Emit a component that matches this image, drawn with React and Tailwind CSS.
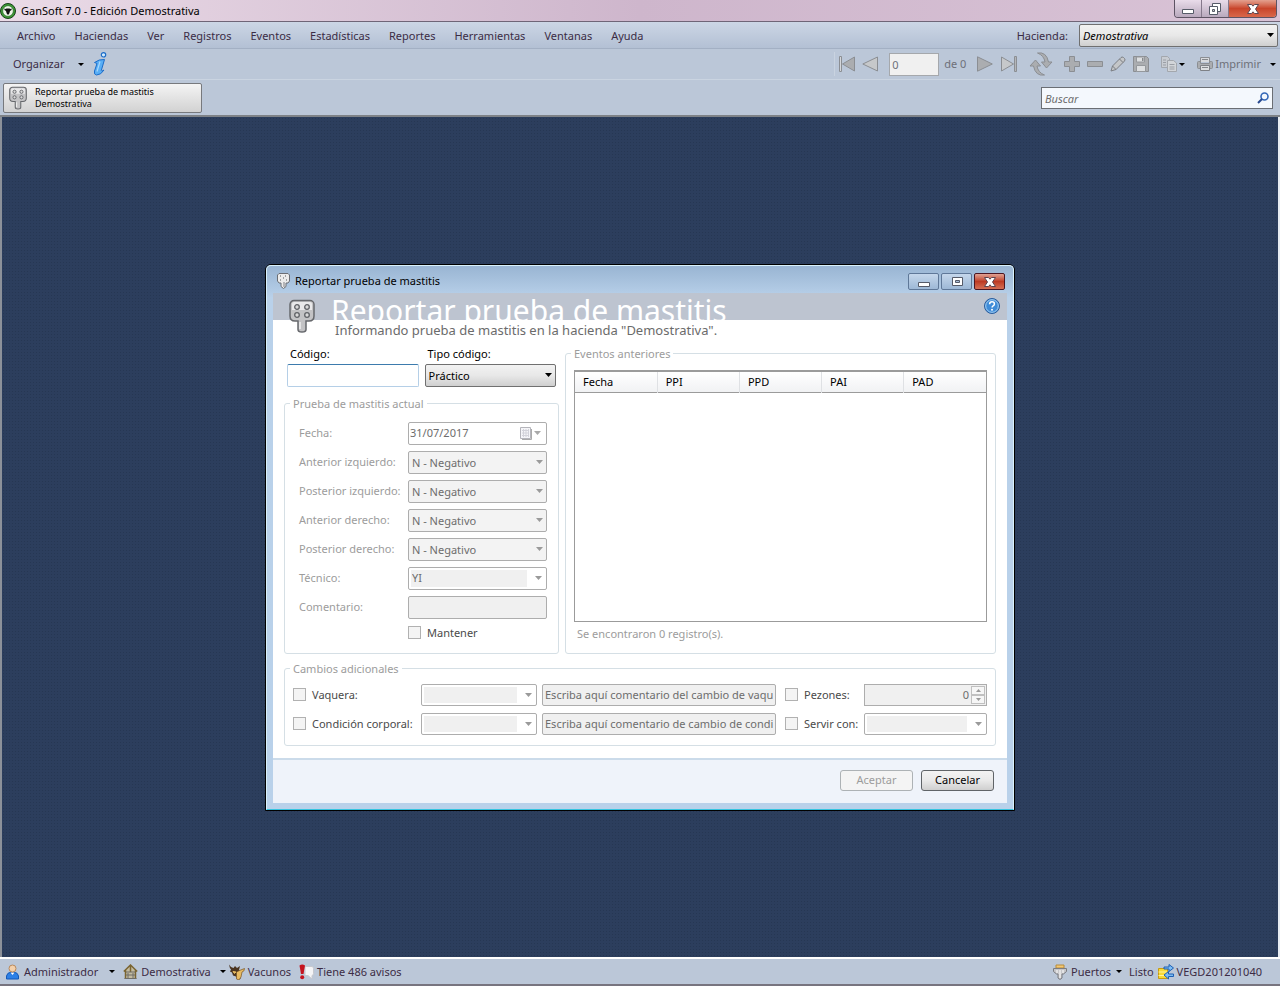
import React from "react";

const Paddle = ({ className }) => (
  <svg className={className} viewBox="0 0 26 34" fill="none">
    <path d="M5 1.500h16a4 4 0 0 1 4 4V17c0 3-2 5-5 5h-3v8.500q0 2.500-4 2.500t-4-2.500V22H6c-3 0-5-2-5-5V5.500a4 4 0 0 1 4-4z" fill="#c3c3c5" stroke="#66686c" strokeWidth="1.500" />
    <path d="M5 3h16q2 0 2 2v6H3V5q0-2 2-2z" fill="#e9e9ea" />
    {[[8, 8], [18, 8], [8, 16], [18, 16]].map(([x, y]) => (
      <circle key={`${x}-${y}`} cx={x} cy={y} r="2.300" fill="#d9d9d9" stroke="#606266" strokeWidth="1.300" />
    ))}
    <path d="M11 23v7" stroke="#efefef" strokeWidth="1.500" />
  </svg>
);

const SmallPaddle = () => (
  <svg className="h-4 w-[13px]" viewBox="0 0 13 16">
    <path d="M2 .5h9l1.500 1.500v6L11 10H9v3.500l-2.500 2-2.500-2V10H2L.5 8V2z" fill="#ececec" stroke="#6b6e74" />
    <path d="M3 2.500h1v1H3zM8 2.500h1v1H8zM6 4.500h1v1H6zM3 6.500h1v1H3zM9 6.500h1v1H9z" fill="#55585e" />
    <path d="M6 9h2v5H6z" fill="#b5b5b8" />
  </svg>
);

const Arrow = ({ className = "text-black" }) => (
  <svg className={`h-1 w-[7px] shrink-0 ${className}`} viewBox="0 0 7 4">
    <path d="M0 0h7L3.500 4z" fill="currentColor" />
  </svg>
);

const SmallArrow = () => (
  <svg className="h-[3px] w-[6px] shrink-0 text-black" viewBox="0 0 6 3">
    <path d="M0 0h6L3 3z" fill="currentColor" />
  </svg>
);

const tool = { fill: "#abadb0", stroke: "#8b8e93", strokeWidth: 1 };
const ToolIcon = ({ children, className = "size-4" }) => (
  <svg className={`shrink-0 ${className}`} viewBox="0 0 16 16">{children}</svg>
);

const toolButtons = {
  first: <><path d="M.5 .5h2v15h-2z" fill="#d4d7db" stroke="#8b8e93" /><path d="M15.500 1v14L3.500 8z" {...tool} /></>,
  prev: <path d="M15.500 1v14L.8 8z" {...tool} fill="#c6c8ca" />,
  next: <path d="M.5 .8v14.400L15.300 8z" {...tool} />,
  last: <><path d="M.5 1v14L12.500 8z" {...tool} fill="#c6c8ca" /><path d="M13.500 .5h2v15h-2z" fill="#b4b6b9" stroke="#8b8e93" /></>,
  plus: <path d="M5.500 .5h5v5h5v5h-5v5h-5v-5h-5v-5h5z" {...tool} />,
  minus: <path d="M.5 5.500h15v5H.5z" {...tool} />,
  pencil: <><path d="M1 15l1.500-5L11 1.500q1-1 2.500 0l1 1q1 1.500 0 2.500L6 13.500z" fill="#c4c6c8" stroke="#7b7e83" /><path d="M2.500 10L6 13.500M9.500 3l3.500 3.500" stroke="#777a80" fill="none" /></>,
  save: <><path d="M.5 .5h13l2 2v13H.5z" {...tool} /><path d="M3.500 1h8v5h-8zM3.500 9.500h9v6h-9z" fill="#dddfe1" stroke="#95989c" /><path d="M9 2h1.500v3H9z" fill="#85888c" /></>,
  copy: <><path d="M.5 .5h6l2 2v9h-8z" fill="#c8ccd2" stroke="#a3a7ad" /><path d="M6.500 4.500h6l3 2.500v8.500h-9z" fill="#d2d5d9" stroke="#a3a7ad" /><path d="M2 4h3M2 6.500h3M2 9h3M8.500 8.500h5M8.500 11h5M8.500 13h5" stroke="#9a9ea5" /></>,
  print: <><path d="M3.500 6V1.500h9V6" fill="#d8dadd" stroke="#8b8e93" /><path d="M1.500 5.500h2v2h9v-2h2q1 0 1 1v5q0 1-1 1h-13q-1 0-1-1v-5q0-1 1-1z" {...tool} /><path d="M3.500 9.500h9v5h-9z" fill="#dcdee0" stroke="#7e8186" /><path d="M5 11.500h6M5 3.500h6" stroke="#85888c" /></>,
};

const ToolButton = ({ label, icon, className = "" }) => (
  <button type="button" aria-label={label} className={className}><ToolIcon>{toolButtons[icon]}</ToolIcon></button>
);

const WinGlyph = ({ kind }) => (
  <svg className="h-3 w-[14px]" viewBox="0 0 14 12">
    {kind === "min" && <path d="M1.500 6.500h11v4h-11z" fill="#fff" stroke="#565b68" />}
    {kind === "max" && <><path d="M2.500 1.500h10v8h-10z" fill="#fff" stroke="#565b68" /><path d="M5.500 4.500h4v2h-4z" fill="#a9bdd6" stroke="#565b68" /></>}
    {kind === "restore" && <><path d="M4.500 .5h8v8h-8z" fill="#fff" stroke="#565b68" /><path d="M1.500 3.500h8v8h-8z" fill="#fff" stroke="#565b68" /><path d="M4.500 6.500h2v2h-2z" fill="#ccc" stroke="#565b68" /></>}
    {kind === "close" && <path d="M1.500 1.500h4L7 3.200l1.500-1.700h4L9.500 6l3 4.500h-4L7 8.800l-1.500 1.700h-4l3-4.500z" fill="#fff" stroke="#5d4650" />}
  </svg>
);

function Select({ id, value, disabled, className = "", label }) {
  const look = disabled ? "border-[#adadad] bg-[#f3f3f3] text-[#6d6d6d]" : "border-[#707070] bg-linear-to-b from-[#f2f2f2] via-[#e8e8e8] to-[#cfcfcf] text-black";
  return (
    <div className={`relative flex min-w-0 items-center ${className}`}>
      <select id={id} aria-label={label} disabled={disabled} className={`h-[23px] w-full min-w-0 appearance-none rounded-[2px] border px-[3px] pt-[2px] disabled:opacity-100 ${look}`}>
        <option>{value}</option>
      </select>
      <span className="pointer-events-none absolute right-1"><Arrow className={disabled ? "text-[#9a9a9a]" : "text-black"} /></span>
    </div>
  );
}

function Combo({ id, value = "", label, height = "h-[23px]" }) {
  return (
    <div className={`relative flex min-w-0 items-center rounded-[2px] border border-[#adadad] bg-white p-[2px] pr-[19px] ${height}`}>
      <select id={id} aria-label={label} disabled className="h-full w-full min-w-0 appearance-none bg-[#f0f0f0] pl-px leading-4 text-[#6d6d6d] disabled:opacity-100">
        <option>{value}</option>
      </select>
      <span className="pointer-events-none absolute right-1"><Arrow className="text-[#9a9a9a]" /></span>
    </div>
  );
}

const boxClass = "size-[13px] shrink-0 appearance-none border border-[#b1b1b1] bg-[#f4f4f4]";

function Check({ id, label }) {
  return (
    <div className="flex items-center gap-[6px]">
      <input id={id} type="checkbox" disabled className={boxClass} />
      <label htmlFor={id} className="whitespace-nowrap text-[#4a4a4a]">{label}</label>
    </div>
  );
}

function Group({ title, className = "", children }) {
  return (
    <fieldset className={`min-w-0 rounded-[3px] border border-[#d5dfe5] ${className}`}>
      <legend className="ml-[5px] px-[3px] leading-4 text-[#9c9c9c]">{title}</legend>
      {children}
    </fieldset>
  );
}

const menus = ["Archivo", "Haciendas", "Ver", "Registros", "Eventos", "Estadísticas", "Reportes", "Herramientas", "Ventanas", "Ayuda"];
const quarters = ["Anterior izquierdo:", "Posterior izquierdo:", "Anterior derecho:", "Posterior derecho:"];
const columns = ["Fecha", "PPI", "PPD", "PAI", "PAD"];

function Header() {
  return (
    <header className="bg-[#bbc7d8] text-[#3b2c45]">
      <div className="flex h-[22px] items-start justify-between border-b border-[#6f6577] bg-linear-to-r from-[#eadbe7] via-[#ceb6cc] to-[#d9c3d6]">
        <div className="flex items-center gap-[5px] text-black">
          <svg className="size-4" viewBox="0 0 16 16">
            <circle cx="8" cy="8" r="7.500" fill="#3f9a35" stroke="#173f19" />
            <circle cx="8" cy="8" r="5.300" fill="#eff6e9" stroke="#1d5a20" strokeWidth=".6" />
            <path d="M4 5.500q1.500.8 2.500 0h3q1 .8 2.500 0-.5 2-2 2.500L9.300 10.500 8 12 6.700 10.500 6 8Q4.500 7.500 4 5.500z" fill="#111" />
          </svg>
          <span className="leading-[22px]">GanSoft 7.0 - Edición Demostrativa</span>
        </div>
        <div className="mr-[3px] flex h-[18px] overflow-hidden rounded-b-[4px] border border-t-0 border-[#5d5363]">
          <button type="button" aria-label="Minimizar" className="flex w-[27px] items-center justify-center border-r border-[#85788b] bg-linear-to-b from-[#e9dcea] to-[#b9a9bd]"><WinGlyph kind="min" /></button>
          <button type="button" aria-label="Restaurar" className="flex w-[27px] items-center justify-center border-r border-[#85788b] bg-linear-to-b from-[#e9dcea] to-[#b9a9bd]"><WinGlyph kind="restore" /></button>
          <button type="button" aria-label="Cerrar" className="flex w-[47px] items-center justify-center bg-linear-to-b from-[#e3a08f] via-[#c8452b] to-[#d9674a]"><WinGlyph kind="close" /></button>
        </div>
      </div>

      <div className="flex h-[27px] items-center justify-between border-b border-[#a3b0c4] bg-linear-to-b from-[#ccd6e5] to-[#b3c0d4] pl-[17px] pr-[2px]">
        <nav className="flex gap-[19px] pt-[2px]">
          {menus.map((m) => <button type="button" key={m}>{m}</button>)}
        </nav>
        <div className="flex items-center gap-[11px]">
          <label htmlFor="hacienda" className="pt-[2px]">Hacienda:</label>
          <Select id="hacienda" value="Demostrativa" className="w-[199px] italic" />
        </div>
      </div>

      <div className="flex h-[31px] items-center justify-between border-b border-[#cad4e1] pl-[13px] pr-1">
        <div className="flex items-center">
          <button type="button" className="flex items-center gap-[14px]">Organizar <SmallArrow /></button>
          <button type="button" aria-label="Información" className="ml-[9px]">
            <svg className="h-6 w-[14px]" viewBox="0 0 14 24">
              <circle cx="10.500" cy="2.800" r="2.200" fill="#d4ecfc" stroke="#1b6cc9" strokeWidth="1.200" />
              <path d="M1.500 10.500Q6 7 11.500 7.500L8.300 18.500q-.2 1.500 2.700-.5-3 5-7.500 5-3-.5-2-4L4 11.500q-1-.5-2.500-1z" fill="#58aef5" stroke="#1b6cc9" />
              <path d="M7 9.500L4 19.500" stroke="#a9d8fb" strokeWidth="1.200" />
            </svg>
          </button>
        </div>
        <div className="flex items-center border-l border-[#c9d3e0] pl-1 text-[#6e7079]">
          <ToolButton label="Primero" icon="first" />
          <ToolButton label="Anterior" icon="prev" className="ml-[7px]" />
          <input aria-label="Posición" defaultValue="0" className="ml-[11px] h-[23px] w-[50px] border border-[#a5a8ac] bg-[#f0f0f0] px-[2px]" />
          <span className="ml-[5px] w-[33px] whitespace-nowrap">de 0</span>
          <ToolButton label="Siguiente" icon="next" />
          <ToolButton label="Último" icon="last" className="ml-2" />
          <button type="button" aria-label="Actualizar" className="ml-3">
            <svg className="size-6" viewBox="0 0 24 24" {...tool}>
              <path d="M8.500 1q9-1.500 11 9h3.500L17.500 16 12.500 10H16Q15 3.500 8.500 1z" />
              <path d="M15.500 23q-9 1.500-11-9H1L6.500 8l5 6H8q1 6.500 7.500 9z" />
            </svg>
          </button>
          <ToolButton label="Agregar" icon="plus" className="ml-[11px]" />
          <ToolButton label="Quitar" icon="minus" className="ml-[7px]" />
          <ToolButton label="Editar" icon="pencil" className="ml-[7px]" />
          <ToolButton label="Guardar" icon="save" className="ml-[7px]" />
          <button type="button" aria-label="Copiar" className="ml-3 flex items-center gap-[2px]"><ToolIcon>{toolButtons.copy}</ToolIcon><SmallArrow /></button>
          <button type="button" className="ml-3 flex items-center gap-[2px]"><ToolIcon>{toolButtons.print}</ToolIcon>Imprimir<span className="ml-[7px] flex"><SmallArrow /></span></button>
        </div>
      </div>

      <div className="flex h-[37px] items-center justify-between border-b-2 border-[#7e8287] pl-[3px] pr-[7px]">
        <button type="button" className="flex h-[30px] w-[199px] items-center gap-2 rounded-[2px] border border-[#77797d] bg-linear-to-b from-[#f4f4f4] to-[#d2d2d2] pl-[5px] text-left text-[9px] leading-3 text-black">
          <Paddle className="h-6 w-[18px]" />
          <span>Reportar prueba de mastitis<br />Demostrativa</span>
        </button>
        <div className="flex h-[22px] w-[232px] items-center border border-[#6a6e74] bg-[#f4f8fd] pl-[3px] pr-[3px]">
          <input aria-label="Buscar" placeholder="Buscar" className="min-w-0 flex-1 pt-[2px] italic outline-none placeholder:text-[#6d6d6d]" />
          <svg className="size-3" viewBox="0 0 12 12" fill="none">
            <circle cx="7.500" cy="4.500" r="3.500" stroke="#3468b8" strokeWidth="1.600" />
            <path d="M5 7L1 11" stroke="#27488e" strokeWidth="2" />
          </svg>
        </div>
      </div>
    </header>
  );
}

function Dialog() {
  const frameButton = "flex h-[17px] w-[31px] items-center justify-center rounded-[2px] border";
  return (
    <section role="dialog" aria-labelledby="dialog-title" className="w-full max-w-[750px] rounded-t-[6px] border border-black bg-linear-to-b from-[#98b4d2] to-[#b9d1ea] to-6%">
      <div className="rounded-t-[5px] border border-[#d9f1fb] border-b-[#35c4e0] px-[6px] pb-[6px]">
        <div className="flex h-[27px] items-center justify-between pl-[4px] pr-[2px]">
          <div className="flex items-center gap-[5px] pt-1">
            <SmallPaddle />
            <h2 id="dialog-title" className="leading-4 text-black">Reportar prueba de mastitis</h2>
          </div>
          <div className="flex gap-[2px] pt-[5px]">
            <button type="button" aria-label="Minimizar" className={`${frameButton} border-[#5f7898] bg-linear-to-b from-[#c5d7eb] to-[#9db8d6]`}><WinGlyph kind="min" /></button>
            <button type="button" aria-label="Maximizar" className={`${frameButton} border-[#5f7898] bg-linear-to-b from-[#c5d7eb] to-[#9db8d6]`}><WinGlyph kind="max" /></button>
            <button type="button" aria-label="Cerrar" className={`${frameButton} border-[#4d1722] bg-linear-to-b from-[#e0a294] via-[#bd3b24] to-[#d56f55]`}><WinGlyph kind="close" /></button>
          </div>
        </div>

        <form className="bg-white" onSubmit={(e) => e.preventDefault()}>
          <div className="flex h-[53px] items-start bg-[linear-gradient(#bdc4d0_27px,#fff_27px)] pl-4 pr-[7px]">
            <Paddle className="mt-[6px] h-[34px] w-[26px] shrink-0" />
            <div className="ml-4 min-w-0 flex-1">
              <h1 className="h-[27px] overflow-hidden whitespace-nowrap text-[30px] leading-9 text-white">Reportar prueba de mastitis</h1>
              <p className="pl-1 pt-[2px] text-[13px] leading-4 text-[#6b6b6b]">Informando prueba de mastitis en la hacienda "Demostrativa".</p>
            </div>
            <button type="button" aria-label="Ayuda" className="mt-[5px]">
              <svg className="size-4" viewBox="0 0 16 16">
                <circle cx="8" cy="8" r="7.500" fill="#3f8cd8" stroke="#2a5c9c" />
                <circle cx="8" cy="8" r="6.300" fill="none" stroke="#a5d0f2" />
                <path d="M5.600 6.200q0-2.400 2.400-2.400t2.400 2.100q0 1.200-1.300 1.900-1 .6-1 1.700" fill="none" stroke="#fff" strokeWidth="1.500" />
                <circle cx="8" cy="11.700" r="1" fill="#fff" />
              </svg>
            </button>
          </div>

          <div className="px-[11px] pb-3">
            <div className="flex gap-[6px]">
              <div className="flex w-[275px] shrink-0 flex-col gap-[9px]">
                <div className="flex gap-[6px] px-[3px] text-black">
                  <div className="flex flex-1 flex-col gap-[2px]">
                    <label htmlFor="codigo" className="pl-[3px] leading-4">Código:</label>
                    <input id="codigo" className="h-[23px] w-full rounded-[2px] border border-[#b5cfe7] border-t-[#3d7bad] px-1 outline-none" />
                  </div>
                  <div className="flex flex-1 flex-col gap-[2px]">
                    <label htmlFor="tipo" className="pl-[3px] leading-4">Tipo código:</label>
                    <Select id="tipo" value="Práctico" />
                  </div>
                </div>

                <Group title="Prueba de mastitis actual" className="flex-1">
                  <div className="grid grid-cols-[109px_minmax(0,1fr)] items-center gap-y-[6px] whitespace-nowrap pb-[11px] pl-[14px] pr-[11px] pt-[10px] text-[#9c9c9c]">
                    <label htmlFor="fecha">Fecha:</label>
                    <div className="flex h-[23px] items-center rounded-[2px] border border-[#adadad] bg-white pl-px pr-[5px]">
                      <input id="fecha" disabled defaultValue="31/07/2017" className="min-w-0 flex-1 text-[#6d6d6d]" />
                      <svg className="mr-[2px] h-[13px] w-3" viewBox="0 0 12 13">
                        <path d="M.5 .5h10v11H.5z" fill="#f5f5f8" stroke="#b5b5bb" />
                        <path d="M2 3.500h7M2 6h7M2 8.500h7M3.500 2v8M6 2v8M8.500 2v8" stroke="#d3d3da" />
                        <path d="M11.500 2v10.500H2" fill="none" stroke="#aaa" />
                      </svg>
                      <Arrow className="text-[#a9a9a9]" />
                    </div>
                    {quarters.map((q, i) => (
                      <React.Fragment key={q}>
                        <label htmlFor={`cuarto-${i}`}>{q}</label>
                        <Select id={`cuarto-${i}`} value="N - Negativo" disabled />
                      </React.Fragment>
                    ))}
                    <label htmlFor="tecnico">Técnico:</label>
                    <Combo id="tecnico" value="YI" />
                    <label htmlFor="comentario">Comentario:</label>
                    <input id="comentario" disabled className="h-[23px] w-full rounded-[2px] border border-[#adadad] bg-[#f0f0f0] px-1" />
                    <div className="col-start-2"><Check id="mantener" label="Mantener" /></div>
                  </div>
                </Group>
              </div>

              <Group title="Eventos anteriores" className="flex-1">
                <div className="flex h-full flex-col px-2 pb-[11px] pt-2">
                  <div className="min-h-[252px] flex-1 border border-t-2 border-[#9b9b9b]">
                    <table className="w-full table-fixed border-collapse text-left text-black">
                      <thead>
                        <tr className="h-[21px] border-b border-[#9b9b9b] bg-linear-to-b from-white to-[#f1f2f4]">
                          {columns.map((c) => <th key={c} scope="col" className="border-r border-[#dfe1e4] px-2 font-normal last:border-r-0">{c}</th>)}
                        </tr>
                      </thead>
                      <tbody />
                    </table>
                  </div>
                  <p className="pl-[3px] pt-1 leading-4 text-[#9c9c9c]">Se encontraron 0 registro(s).</p>
                </div>
              </Group>
            </div>

            <Group title="Cambios adicionales" className="mt-[7px]">
              <div className="grid grid-cols-[128px_116px_minmax(0,1fr)_79px_123px] items-center gap-y-[7px] px-2 pb-[10px] pt-[7px]">
                <Check id="vaquera" label="Vaquera:" />
                <Combo label="Vaquera" height="h-[22px]" />
                <div className="pl-[5px] pr-[9px]"><input aria-label="Comentario del cambio de vaquera" disabled defaultValue="Escriba aquí comentario del cambio de vaquera" className="h-[22px] w-full rounded-[2px] border border-[#adadad] bg-[#f0f0f0] px-[2px] text-[#6d6d6d]" /></div>
                <Check id="pezones" label="Pezones:" />
                <div className="flex h-[22px] items-center border border-[#adadad] bg-[#f0f0f0] p-px">
                  <input aria-label="Cantidad de pezones" disabled defaultValue="0" className="min-w-0 flex-1 pr-[2px] text-right text-[#6d6d6d]" />
                  <div className="flex w-[14px] flex-col">
                    <button type="button" disabled aria-label="Aumentar" className="flex h-[9px] items-center justify-center border border-[#c0c0c0] bg-[#f6f6f6]"><svg className="h-[3px] w-[5px]" viewBox="0 0 5 3"><path d="M0 3h5L2.500 0z" fill="#999" /></svg></button>
                    <button type="button" disabled aria-label="Disminuir" className="flex h-[9px] items-center justify-center border border-[#c0c0c0] bg-[#f6f6f6]"><svg className="h-[3px] w-[5px]" viewBox="0 0 5 3"><path d="M0 0h5L2.500 3z" fill="#999" /></svg></button>
                  </div>
                </div>
                <Check id="condicion" label="Condición corporal:" />
                <Combo label="Condición corporal" height="h-[22px]" />
                <div className="pl-[5px] pr-[9px]"><input aria-label="Comentario de cambio de condición" disabled defaultValue="Escriba aquí comentario de cambio de condición" className="h-[22px] w-full rounded-[2px] border border-[#adadad] bg-[#f0f0f0] px-[2px] text-[#6d6d6d]" /></div>
                <Check id="servir" label="Servir con:" />
                <Combo label="Servir con" height="h-[22px]" />
              </div>
            </Group>
          </div>

          <div className="flex h-[45px] items-center justify-end gap-2 border-t-2 border-[#cbdbea] bg-[#eff3fa] pb-[2px] pr-[13px]">
            <button type="button" disabled className="h-[21px] w-[73px] rounded-[3px] border border-[#adb2b5] bg-[#f4f4f4] text-[#9c9c9c]">Aceptar</button>
            <button type="button" className="h-[21px] w-[73px] rounded-[3px] border border-[#606468] bg-linear-to-b from-[#f3f3f3] via-[#e9e9e9] to-[#cfcfcf] text-black">Cancelar</button>
          </div>
        </form>
      </div>
    </section>
  );
}

function StatusBar() {
  return (
    <footer className="flex h-[29px] items-center justify-between border-b-2 border-t-2 border-b-[#77747f] border-t-white bg-[#bbc7d8] pl-[6px] pr-[18px] text-[#3b2c45]">
      <div className="flex items-center">
        <svg className="h-4 w-[13px]" viewBox="0 0 13 16">
          <path d="M.5 15V12q1-3.500 3.500-3.500h5q2.500 0 3.500 3.500v3z" fill="#2d80e6" stroke="#1459b8" />
          <path d="M4.500 8.500L6.500 11l2-2.500z" fill="#fff" />
          <circle cx="6.500" cy="4.500" r="3.500" fill="#f3d0ab" stroke="#b98a5e" />
        </svg>
        <button type="button" className="ml-[5px] flex items-center gap-[11px]">Administrador <SmallArrow /></button>
        <svg className="ml-2 h-4 w-[15px]" viewBox="0 0 15 16" fill="none">
          <path d="M2.500 6L7.500 1.500 12.500 6v9h-10z" fill="#c3bba0" />
          <path d="M.8 7.500L7.500 1l6.700 6.500M2.500 6v9M12.500 6v9M7.500 1v7" stroke="#7a6430" strokeWidth="1.500" />
          <path d="M3 8h9M3 11h9M1.500 14.500h12M5 9v5M10 9v5" stroke="#6f6d66" />
        </svg>
        <button type="button" className="ml-[3px] flex items-center gap-[9px]">Demostrativa <SmallArrow /></button>
        <svg className="ml-[3px] size-4" viewBox="0 0 16 16">
          <path d="M0 .5q1.500 3 4.500 3.500L6 2l2 2 3-2-1 4 2 1-1 4 .5 4-2.500.5-2-3-3-1-1-3-2-1 1-2Q.5 4 0 .5z" fill="#4b3521" />
          <path d="M7.500 8l3-1.500 5-2q0 3-2.500 3.500l-1 5-2 3-2.500-1z" fill="#e7bb62" stroke="#7a5423" strokeWidth=".7" />
          <path d="M4 7.500l3 .5-1.500 1.500zM8 13l2 1.500" fill="#e7bb62" stroke="#e7bb62" />
        </svg>
        <button type="button" className="ml-[3px]">Vacunos</button>
        <svg className="ml-2 h-4 w-[15px]" viewBox="0 0 15 16">
          <path d="M6 2.500h7q1.500 0 1.500 2v5q0 2-1.500 2v3.500l-4-3.500H6z" fill="#f4f4f6" stroke="#c6c8ce" />
          <path d="M.5 1.500Q3.200-.5 6 1.500L4.500 10H2z" fill="#c5131e" /><circle cx="3.200" cy="13.300" r="2" fill="#c5131e" />
        </svg>
        <button type="button" className="ml-[3px]">Tiene 486 avisos</button>
      </div>
      <div className="flex items-center">
        <svg className="h-4 w-[14px]" viewBox="0 0 14 16">
          <path d="M3 1h8v3H3z" fill="#f3c874" stroke="#b68a3b" />
          <path d="M.5 4.500h13v3L10.500 10H9v4l-2 1.500L5 14v-4H3.500L.5 7.500z" fill="#c6c6c9" stroke="#7b7c81" />
          <path d="M4 6v3M7 6v8M10 6v3" stroke="#fff" />
        </svg>
        <button type="button" className="ml-1 flex items-center gap-[5px]">Puertos <SmallArrow /></button>
        <span className="ml-[7px]">Listo</span>
        <svg className="ml-1 size-4" viewBox="0 0 16 16">
          <path d="M.5 4.500h9v10h-9z" fill="#f7d937" stroke="#c79a12" />
          <path d="M.5 8h9M.5 11.500h9" stroke="#fff3a0" />
          <path d="M6 3h5V.5L15.500 4 11 7.500V5H6z" fill="#7cbcf3" stroke="#1d5fb4" />
          <path d="M15.500 10h-5V7.500L6 11l4.500 4V12.500h5z" fill="#7cbcf3" stroke="#1d5fb4" />
        </svg>
        <span className="ml-[3px]">VEGD201201040</span>
      </div>
    </footer>
  );
}

export default function App() {
  return (
    <div className="flex min-h-screen flex-col bg-[#bbc7d8] font-['Noto_Sans','Open_Sans',sans-serif] text-[11px] leading-4">
      <Header />
      <main className="flex flex-1 items-center justify-center border-l-2 border-r-2 border-l-[#8c9199] border-r-[#e8edf3] bg-[#2c3e5d] bg-[radial-gradient(#263753_1px,transparent_1px)] bg-size-[3px_3px]">
        <Dialog />
      </main>
      <StatusBar />
    </div>
  );
}
